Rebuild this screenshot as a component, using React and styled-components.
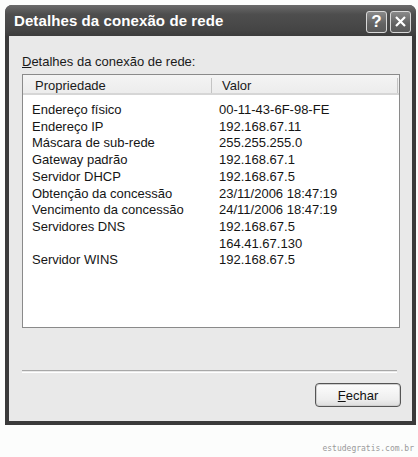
import { Fragment } from "react";
import styled, { createGlobalStyle } from "styled-components";

const GlobalStyle = createGlobalStyle`
  html, body {
    margin: 0;
    padding: 0;
    background: #fcfdfc;
  }
`;

const rows = [
  ["Endereço físico", "00-11-43-6F-98-FE"],
  ["Endereço IP", "192.168.67.11"],
  ["Máscara de sub-rede", "255.255.255.0"],
  ["Gateway padrão", "192.168.67.1"],
  ["Servidor DHCP", "192.168.67.5"],
  ["Obtenção da concessão", "23/11/2006 18:47:19"],
  ["Vencimento da concessão", "24/11/2006 18:47:19"],
  ["Servidores DNS", "192.168.67.5"],
  ["", "164.41.67.130"],
  ["Servidor WINS", "192.168.67.5"],
];

const Page = styled.div`
  width: 418px;
  height: 457px;
  padding: 5px 2px 0 5px;
  box-sizing: border-box;
  display: flex;
  flex-direction: column;
  font-family: "Liberation Sans", Arial, sans-serif;
`;

const Window = styled.div`
  width: 411px;
  background: #3a3a3a;
  border-radius: 7px 7px 0 0;
  display: flex;
  flex-direction: column;
  padding: 0 4px 4px 4px;
  box-sizing: border-box;
`;

const TitleBar = styled.div`
  height: 31px;
  display: flex;
  align-items: center;
  justify-content: space-between;
  background: linear-gradient(#6a6a6a, #4e4e4e 30%, #454545 80%, #3c3c3c);
  margin: 0 -4px;
  padding-left: 9px;
  padding-right: 5px;
  border-radius: 7px 7px 0 0;
`;

const Title = styled.span`
  color: #ffffff;
  font-size: 15px;
  font-weight: bold;
  letter-spacing: 0.1px;
`;

const Controls = styled.div`
  display: flex;
  gap: 3px;
  margin-top: 2px;
`;

const CtrlButton = styled.div`
  width: 21px;
  height: 22px;
  box-sizing: border-box;
  border: 1px solid #d8d8d8;
  border-radius: 3px;
  background: linear-gradient(#8a8a8a, #626262 60%, #5a5a5a);
  display: flex;
  align-items: center;
  justify-content: center;
  color: #fff;
  font-size: 17px;
  font-weight: bold;
`;

const Body = styled.div`
  background: #e9e9e9;
  display: flex;
  flex-direction: column;
  padding: 18px 12px 14px 13px;
  height: 385px;
  box-sizing: border-box;
`;

const Label = styled.div`
  font-size: 13px;
  line-height: 15px;
  color: #1a1a1a;
  margin-bottom: 5px;
`;

const ListBox = styled.div`
  height: 254px;
  box-sizing: border-box;
  border: 1px solid #8a8a8a;
  background: #ffffff;
  display: flex;
  flex-direction: column;
`;

const Header = styled.div`
  height: 20px;
  display: grid;
  grid-template-columns: 189px 186px 1fr;
  background: linear-gradient(#f4f4f4, #ececec);
  border-bottom: 2px solid #d6d6d6;
  box-sizing: border-box;
`;

const HeaderCell = styled.div`
  display: flex;
  align-items: center;
  font-size: 13px;
  color: #1a1a1a;
  padding-left: ${(p) => p.$pad}px;
  border-right: ${(p) => (p.$divider ? "1px solid #c4c4c4" : "none")};
  margin: 3px 0;
`;

const Rows = styled.div`
  display: grid;
  grid-template-columns: 187px 1fr;
  padding: 7px 0 0 9px;
`;

const Cell = styled.div`
  font-size: 13px;
  line-height: 16.7px;
  color: #151515;
  white-space: nowrap;
`;

const Separator = styled.div`
  margin-top: auto;
  height: 1px;
  border-top: 1px solid #a8a8a8;
  border-bottom: 1px solid #ffffff;
  margin-right: 3px;
`;

const Footer = styled.div`
  display: flex;
  justify-content: flex-end;
  margin-top: 10px;
`;

const Button = styled.button`
  width: 86px;
  height: 24px;
  border: 1px solid #555;
  border-radius: 4px;
  background: linear-gradient(#fdfdfd, #eeeeee 70%, #dcdcdc);
  box-shadow: inset 0 0 0 1px #cfcfcf;
  font-family: "Liberation Sans", Arial, sans-serif;
  font-size: 13px;
  color: #111;
  padding: 0;
  margin-right: -1px;
`;

const Watermark = styled.div`
  margin-top: 19px;
  align-self: flex-end;
  font-family: "DejaVu Sans Mono", monospace;
  font-size: 8px;
  color: #9a9a9a;
  margin-right: 2px;
`;

export default function App() {
  return (
    <Page>
      <GlobalStyle />
      <Window>
        <TitleBar>
          <Title>Detalhes da conexão de rede</Title>
          <Controls>
            <CtrlButton>?</CtrlButton>
            <CtrlButton>
              <svg width="13" height="13" viewBox="0 0 13 13">
                <path d="M2 2 L11 11 M11 2 L2 11" stroke="#fff" strokeWidth="2.2" />
              </svg>
            </CtrlButton>
          </Controls>
        </TitleBar>
        <Body>
          <Label>
            <u>D</u>etalhes da conexão de rede:
          </Label>
          <ListBox>
            <Header>
              <HeaderCell $pad={12} $divider>
                Propriedade
              </HeaderCell>
              <HeaderCell $pad={10} $divider>
                Valor
              </HeaderCell>
              <HeaderCell $pad={0} />
            </Header>
            <Rows>
              {rows.map(([k, v], i) => (
                <Fragment key={i}>
                  <Cell>{k}</Cell>
                  <Cell>{v}</Cell>
                </Fragment>
              ))}
            </Rows>
          </ListBox>
          <Separator />
          <Footer>
            <Button>
              <u>F</u>echar
            </Button>
          </Footer>
        </Body>
      </Window>
      <Watermark>estudegratis.com.br</Watermark>
    </Page>
  );
}
